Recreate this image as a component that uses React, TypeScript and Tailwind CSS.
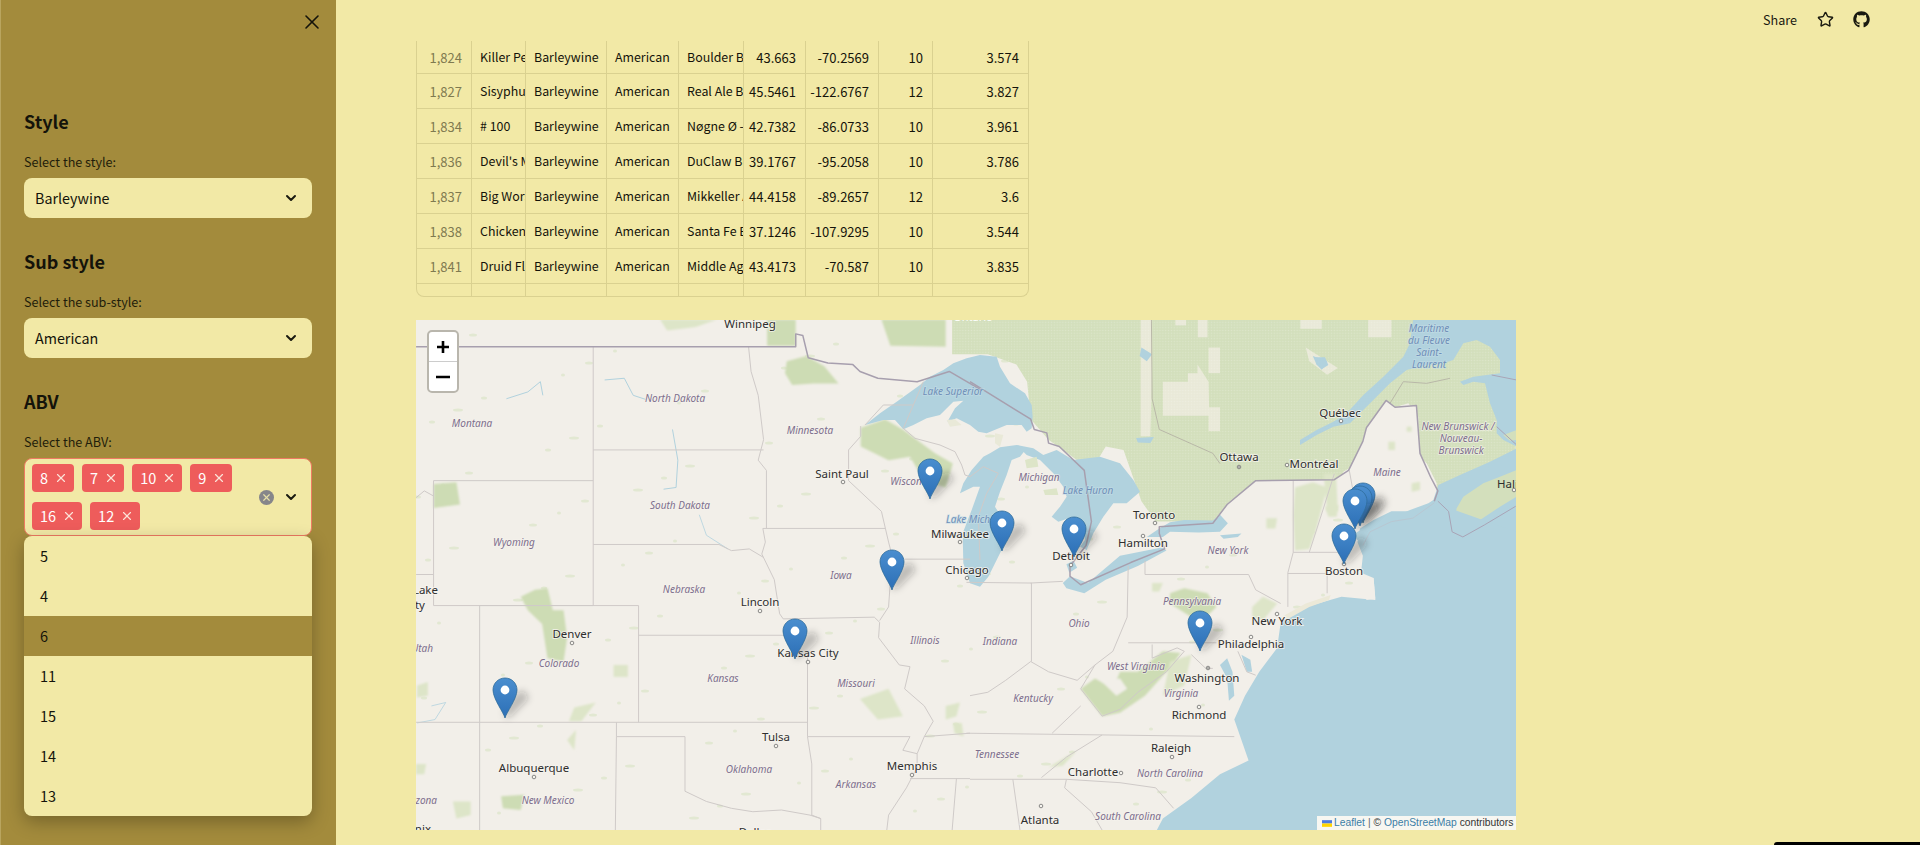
import React from "react";
import { ChevronDown, X, Star } from "lucide-react";
import { FaGithub } from "react-icons/fa";

const rows = [
  ["1,824", "Killer Pecan", "Barleywine", "American", "Boulder Beer", "43.663", "-70.2569", "10", "3.574"],
  ["1,827", "Sisyphus", "Barleywine", "American", "Real Ale Brewing", "45.5461", "-122.6767", "12", "3.827"],
  ["1,834", "# 100", "Barleywine", "American", "Nøgne Ø - Brewery", "42.7382", "-86.0733", "10", "3.961"],
  ["1,836", "Devil's Milk", "Barleywine", "American", "DuClaw Brewing", "39.1767", "-95.2058", "10", "3.786"],
  ["1,837", "Big Worse", "Barleywine", "American", "Mikkeller ApS", "44.4158", "-89.2657", "12", "3.6"],
  ["1,838", "Chicken Killer", "Barleywine", "American", "Santa Fe Brewing", "37.1246", "-107.9295", "10", "3.544"],
  ["1,841", "Druid Fluid", "Barleywine", "American", "Middle Ages", "43.4173", "-70.587", "10", "3.835"],
  ["", "", "", "", "", "", "", "", ""],
];

const widths = ["w-[55px]", "w-[54px]", "w-[81px]", "w-[72px]", "w-[65px]", "w-[62px]", "w-[73px]", "w-[54px]", "flex-1"];
const right = [true, false, false, false, false, true, true, true, true];

function Cell({ i, text, last }: { i: number; text: string; last: boolean }) {
  return (
    <div
      className={`${widths[i]} shrink-0 h-full flex items-center overflow-hidden whitespace-nowrap ${
        right[i] ? "justify-end pr-[9px] text-[13px]" : "pl-[8px] text-[12.4px]"
      } ${last ? "" : "border-r border-[#dad190]"} ${i === 0 ? "text-[#7f7a50]" : "text-[#14130a]"}`}
    >
      {text}
    </div>
  );
}

function Table() {
  return (
    <div className="w-[613px] h-[256px] overflow-hidden border-x border-b border-[#dad190] rounded-b-[8px] leading-none">
      {rows.map((r, idx) => (
        <div
          key={idx}
          className={`flex ${idx === 0 ? "h-[33px]" : "h-[35px]"} ${idx === rows.length - 1 ? "" : "border-b border-[#dad190]"}`}
        >
          {r.map((t, i) => (
            <Cell key={i} i={i} text={t} last={i === 8} />
          ))}
        </div>
      ))}
    </div>
  );
}

function SelectBox({ value }: { value: string }) {
  return (
    <div className="h-[40px] rounded-[8px] bg-[#f2e9a6] flex items-center justify-between pl-[11px] pr-[13px] text-[14.3px] text-[#14130a]">
      <span>{value}</span>
      <ChevronDown size={16} strokeWidth={3} className="text-[#1a1a10]" />
    </div>
  );
}

function Heading({ children, className }: { children: React.ReactNode; className: string }) {
  return <div className={`text-[18px] leading-[22px] pb-[2px] font-semibold text-[#14130a] ${className}`}>{children}</div>;
}

function Label({ children, className }: { children: React.ReactNode; className: string }) {
  return <div className={`text-[12.6px] leading-[20px] pb-[6px] text-[#1f1d0a] ${className}`}>{children}</div>;
}

function Tag({ n }: { n: string }) {
  return (
    <div className="h-[28px] rounded-[4px] bg-[#ee5c5b] text-white text-[14.5px] flex items-center pl-[8px] pr-[6px] gap-[6px]">
      <span>{n}</span>
      <X size={14} strokeWidth={2} className="text-[#fbe3d8]" />
    </div>
  );
}

function Sidebar() {
  const opts = ["5", "4", "6", "11", "15", "14", "13"];
  return (
    <aside className="w-[336px] shrink-0 h-full bg-[#a38b3c] border-l border-[#b9a55f] pl-[23px] pr-[24px] flex flex-col">
      <div className="h-[110px] flex justify-end items-start pt-[10px] -mr-[12px]">
        <X size={24} strokeWidth={1.6} className="text-[#14130a]" />
      </div>
      <Heading className="">Style</Heading>
      <Label className="mt-[18px]">Select the style:</Label>
      <SelectBox value="Barleywine" />
      <Heading className="mt-[32px]">Sub style</Heading>
      <Label className="mt-[18px]">Select the sub-style:</Label>
      <SelectBox value="American" />
      <Heading className="mt-[32px]">ABV</Heading>
      <Label className="mt-[18px]">Select the ABV:</Label>
      <div className="h-[78px] rounded-[8px] bg-[#f2e9a6] border border-[#ee7a62] flex items-center">
        <div className="w-[234px] pl-[7px] flex flex-wrap gap-x-[8px] gap-y-[10px]">
          {["8", "7", "10", "9", "16", "12"].map((n) => (
            <Tag key={n} n={n} />
          ))}
        </div>
        <div className="w-[15px] h-[15px] rounded-full bg-[#86868a] flex items-center justify-center">
          <X size={11} strokeWidth={2.6} className="text-[#e6dfa8]" />
        </div>
        <ChevronDown size={16} strokeWidth={3} className="ml-[9px] text-[#1a1a10]" />
      </div>
      <div className="rounded-[8px] overflow-hidden bg-[#f2e9a6] shadow-[0_6px_18px_rgba(0,0,0,0.28)] relative">
        {opts.map((o) => (
          <div
            key={o}
            className={`h-[40px] pl-[16px] flex items-center text-[14.5px] text-[#14130a] ${o === "6" ? "bg-[#a38b3c]" : ""}`}
          >
            {o}
          </div>
        ))}
      </div>
    </aside>
  );
}

const A = "translate(410 310) scale(0.35714 0.3413)";
const B = "translate(970 310) scale(0.35714 0.3413)";
const C = "translate(840 360) scale(0.33333)";
const D = "translate(1300 320) scale(0.33333)";

const Fill = ({ p, c }: { p: string; c: string }) => <polygon points={p} fill={c} />;
const Ln = ({ p, c = "#cfcac8", w = 1 }: { p: string; c?: string; w?: number }) => (
  <polyline points={p} fill="none" stroke={c} strokeWidth={w} vectorEffect="non-scaling-stroke" strokeLinejoin="round" />
);

const WATER = "#b1d2de";
const FOREST = "#cddcb4";
const SOFT = "#dde5c8";
const CAN = "#d3dfbc";
const PALE = "#e9e9d8";
const BORDER = "#a79fae";
const CANADA =
  "-50,28 1528,28 1528,650 1310,530 1290,490 1260,420 1250,280 1190,285 1165,265 1110,345 1100,385 1060,470 1020,497 800,500 720,570 680,620 520,620 480,560 430,410 380,400 340,470 220,380 170,320 160,210 130,160 50,130 -50,130";

const specks = Array.from({ length: 170 }, (_, i) => {
  const x = 416 + ((i * 397 + 31) % 1000);
  const y = 330 + ((i * 211 + 17) % 490);
  return { x, y, rx: 2 + (i % 4), ry: 1.5 + ((i * 3) % 3) };
});

const cities: [string, number, number][] = [
  ["Winnipeg", 750, 325],
  ["Saint Paul", 842, 475],
  ["Lincoln", 760, 603],
  ["Denver", 572, 635],
  ["Kansas City", 808, 654],
  ["Tulsa", 776, 738],
  ["Albuquerque", 534, 769],
  ["Memphis", 912, 767],
  ["Milwaukee", 960, 535],
  ["Chicago", 967, 571],
  ["Toronto", 1154, 516],
  ["Hamilton", 1143, 544],
  ["Detroit", 1071, 557],
  ["Ottawa", 1239, 458],
  ["Montréal", 1314, 465],
  ["Québec", 1340, 414],
  ["Boston", 1344, 572],
  ["New York", 1277, 622],
  ["Philadelphia", 1251, 645],
  ["Washington", 1207, 679],
  ["Richmond", 1199, 716],
  ["Raleigh", 1171, 749],
  ["Charlotte", 1093, 773],
  ["Atlanta", 1040, 821],
  ["Dallas", 755, 833],
];

const states: [string, number, number][] = [
  ["Montana", 472, 424],
  ["North Dakota", 675, 399],
  ["Minnesota", 810, 431],
  ["Wiscon", 906, 482],
  ["South Dakota", 680, 506],
  ["Wyoming", 514, 543],
  ["Nebraska", 684, 590],
  ["Iowa", 841, 576],
  ["Illinois", 925, 641],
  ["Colorado", 559, 664],
  ["Kansas", 723, 679],
  ["Missouri", 856, 684],
  ["Oklahoma", 749, 770],
  ["Arkansas", 856, 785],
  ["New Mexico", 548, 801],
  ["Maine", 1387, 473],
  ["New York", 1228, 551],
  ["Pennsylvania", 1192, 602],
  ["Ohio", 1079, 624],
  ["Indiana", 1000, 642],
  ["West Virginia", 1136, 667],
  ["Virginia", 1181, 694],
  ["Kentucky", 1033, 699],
  ["Tennessee", 997, 755],
  ["North Carolina", 1170, 774],
  ["South Carolina", 1128, 817],
  ["Michigan", 1039, 478],
  ["New Brunswick /", 1458, 427],
  ["Nouveau-", 1461, 439],
  ["Brunswick", 1461, 451],
];

const waters: [string, number, number][] = [
  ["Lake Superior", 953, 392],
  ["Lake Huron", 1088, 491],
  ["Lake Michigan", 978, 520],
  ["Estuaire", 1429, 316],
  ["Maritime", 1429, 329],
  ["du Fleuve", 1429, 341],
  ["Saint-", 1429, 353],
  ["Laurent", 1429, 365],
];

const dots: [number, number][] = [
  [843, 482], [760, 611], [572, 643], [808, 662], [776, 746], [534, 777], [912, 775], [960, 542], [967, 578],
  [1155, 523], [1143, 536], [1071, 565], [1239, 467], [1287, 465], [1341, 421], [1344, 564], [1277, 614],
  [1251, 637], [1208, 668], [1199, 707], [1172, 757], [1121, 773], [1041, 806], [1514, 490],
];

const pins: [number, number][] = [
  [1363, 523], [1360, 526], [1355, 529], [1344, 564], [930, 499], [892, 590], [795, 659], [505, 718], [1002, 551], [1074, 557], [1200, 651],
];

function Pin({ x, y }: { x: number; y: number }) {
  return (
    <g transform={`translate(${x} ${y})`}>
      <polygon points="0,0 6,-2 24,-20 18,-28 8,-22 0,-8" fill="rgba(40,40,40,0.26)" filter="url(#blur)" />
      <path
        d="M0 0C-1 -5 -12 -19 -12 -28C-12 -35 -6.5 -40 0 -40C6.5 -40 12 -35 12 -28C12 -19 1 -5 0 0Z"
        fill="url(#pin)"
        stroke="#2f6c9a"
        strokeWidth="0.8"
      />
      <circle cx="0" cy="-28" r="4.4" fill="#fff" />
    </g>
  );
}

function MapArt() {
  return (
    <svg viewBox="416 320 1100 510" className="w-full h-full block">
      <defs>
        <linearGradient id="pin" x1="0" y1="0" x2="0" y2="1">
          <stop offset="0" stopColor="#4a8ecf" />
          <stop offset="1" stopColor="#2c6fb6" />
        </linearGradient>
        <filter id="blur" x="-50%" y="-50%" width="200%" height="200%">
          <feGaussianBlur stdDeviation="3.5" />
        </filter>
        <filter id="soft" x="-5%" y="-5%" width="110%" height="110%">
          <feGaussianBlur stdDeviation="2.5" />
        </filter>
        <pattern id="tex" width="8" height="8" patternUnits="userSpaceOnUse">
          <circle cx="4" cy="4" r="2" fill="#ffffff" fillOpacity="0.22" />
        </pattern>
      </defs>
      <rect x="416" y="320" width="1100" height="510" fill="#f2efe9" />

      {specks.map((s, i) => (
        <ellipse key={i} cx={s.x} cy={s.y} rx={s.rx} ry={s.ry} fill="#e2e8d2" />
      ))}

      {/* US forests, west and centre */}
      <g transform={A}>
        <g filter="url(#soft)">
          <Fill c={FOREST} p="1055,150 1110,135 1160,165 1200,215 1130,215 1070,220 1050,185" />
          <Fill c={FOREST} p="1262,345 1330,320 1380,350 1470,420 1520,450 1500,520 1440,500 1400,430 1340,440 1262,400" />
          <Fill c={FOREST} p="1320,28 1500,28 1500,108 1345,105" />
          <Fill c={FOREST} p="1000,28 1080,28 1080,105 1000,105" />
          <Fill c={SOFT} p="700,28 860,28 800,50 720,60" />
          <Fill c={FOREST} p="66,510 130,505 140,570 66,580" />
          <Fill c={FOREST} p="310,840 350,820 385,815 400,880 430,880 440,960 430,1030 385,1020 370,920 330,880" />
          <Fill c={SOFT} p="445,1205 460,1165 520,1150 480,1205" />
          <Fill c={SOFT} p="1260,1140 1340,1110 1380,1190 1310,1200" />
          <Fill c={FOREST} p="255,1425 320,1420 310,1465 260,1460" />
          <Fill c={SOFT} p="440,1260 465,1230 460,1290" />
          <Fill c={SOFT} p="570,1040 610,1040 610,1075 570,1075" />
          <Fill c={SOFT} p="1500,1160 1540,1150 1530,1190 1500,1200" />
          <Fill c={SOFT} p="1520,1210 1545,1210 1550,1250 1525,1240" />
          <Fill c={SOFT} p="120,1440 170,1440 170,1480 130,1490" />
          <Fill c={SOFT} p="17,1330 45,1330 40,1360 17,1360" />
          <Fill c={SOFT} p="20,1100 50,1090 50,1130 20,1135" />
        </g>
        <Ln c={WATER} w={1} p="270,260 330,240 365,210 372,250" />
        <Ln c={WATER} w={1} p="545,205 600,200 625,250 660,262" />
        <Ln c={WATER} w={1} p="735,350 750,440 745,520 710,525" />
        <Ln c={WATER} w={0.8} p="810,600 830,660 890,700" />
        <Ln c={WATER} w={0.8} p="60,1160 100,1150 70,1200 20,1210" />
      </g>

      {/* Canada */}
      <g transform={B}>
        <Fill c={CAN} p={CANADA} />
        <Fill c={PALE} p="478,28 510,28 510,170 505,370 478,370" />
        <Fill c={PALE} p="540,210 610,210 610,185 637,185 637,160 668,210 670,310 540,310" />
        <Fill c={PALE} p="668,110 700,110 700,185 668,185" />
        <Fill c={PALE} p="668,285 700,285 700,355 668,355" />
        <Fill c={PALE} p="638,28 665,28 665,80 638,80" />
        <Fill c={PALE} p="925,28 985,28 985,55 925,55" />
        <Fill c={PALE} p="1115,28 1180,28 1180,80 1115,80" />
        <Fill c={PALE} p="575,28 605,28 605,45 575,45" />
        <Fill c={PALE} p="940,110 1030,170 1000,190 950,150" />
        <polygon points={CANADA} fill="url(#tex)" />
        <Fill c={WATER} p="960,135 1000,150 985,175 970,160" />
        <Fill c={WATER} p="480,110 510,130 495,150 475,135" />
        <Fill c={WATER} p="465,375 515,372 505,390 470,388" />
      </g>
      <g transform={B}>
        <g filter="url(#soft)">
          <Fill c={SOFT} p="910,520 960,505 1000,520 970,640 950,700 910,705 905,600" />
          <Fill c={SOFT} p="990,480 1025,480 1030,590 1000,590" />
          <Fill c={FOREST} p="560,830 600,815 665,830 690,870 660,900 620,900 560,860" />
          <Fill c={FOREST} p="310,1110 350,1080 400,1110 420,1060 470,1060 540,1000 590,1005 550,1060 490,1130 420,1180 370,1190" />
          <Fill c="#f2efe9" p="370,1090 420,1080 440,1110 410,1130" />
          <Fill c={SOFT} p="790,870 820,840 860,860 820,910 790,900" />
          <Fill c={SOFT} p="830,610 860,610 855,640 830,640" />
          <Fill c={SOFT} p="220,1340 300,1290 260,1335" />
          <Fill c={SOFT} p="560,1030 620,1010 600,1100 540,1130" />
          <Fill c={SOFT} p="510,800 540,800 530,825 510,825" />
        </g>
      </g>
      {/* Maine on top of the Canadian green */}
      <g transform={D}>
        <Fill c="#f2efe9" p="130,455 155,440 185,370 200,330 260,240 275,265 325,250 355,290 355,410 380,430 410,490 410,530 300,600 170,640 130,600" />
        <g filter="url(#soft)">
          <Fill c={SOFT} p="265,365 285,365 285,390 265,390" />
          <Fill c={SOFT} p="320,320 335,320 335,335 320,335" />
          <Fill c={SOFT} p="335,490 360,485 360,510 335,515" />
          <Fill c={SOFT} p="75,560 115,555 110,590 85,590" />
        </g>
      </g>

      {/* Water */}
      <g transform={C}>
        <Fill
          c={WATER}
          p="75,195 120,160 170,125 240,75 270,50 310,30 340,10 380,-5 420,-15 470,-10 480,20 510,70 555,100 575,135 578,170 575,205 560,215 545,195 500,195 440,220 415,215 390,195 350,175 322,185 345,145 370,122 340,125 300,165 260,175 220,195 190,208 165,180 130,180"
        />
        <Fill
          c={WATER}
          p="360,400 370,370 395,330 430,290 450,280 480,262 530,255 560,265 540,290 515,300 500,345 480,395 465,440 490,480 510,520 480,580 445,650 420,680 390,670 370,610 368,520 395,450 420,380 400,380"
        />
        <Fill
          c={WATER}
          p="530,255 580,265 610,285 650,270 700,300 780,290 840,310 880,360 900,395 860,430 820,430 790,470 760,520 740,570 720,560 735,540 730,500 700,470 655,485 635,470 660,440 680,410 670,380 640,340 600,300 560,285"
        />
        <Fill c={PALE} p="320,180 345,178 365,195 330,200" />
        <Fill c={PALE} p="465,220 490,225 480,260 465,250" />
        <Fill c={SOFT} p="555,300 590,290 595,320 560,325" />
        <Fill c={SOFT} p="610,390 650,385 655,405 615,405" />
      </g>
      <g transform={B}>
        <Fill c={WATER} p="260,800 280,780 330,800 420,720 540,695 550,705 470,750 380,790 320,830 270,815" />
        <Fill c={WATER} p="270,745 290,735 300,755 278,770" />
        <Fill c={WATER} p="495,665 530,640 560,622 600,615 680,617 700,600 722,625 700,650 640,652 560,650 540,665" />
        <Fill c={WATER} p="700,1040 720,1020 735,1060 740,1130 725,1145 720,1080" />
        <Fill c={WATER} p="760,1010 785,1025 790,1060 775,1060" />
        <Fill c={WATER} p="700,660 760,655 750,665 710,670" />
      </g>
      <g transform={D}>
        <Fill
          c={WATER}
          p="340,-5 650,-5 650,380 610,360 590,340 590,300 570,250 555,190 520,185 490,195 480,185 520,170 600,160 600,120 570,80 530,60 490,70 460,120 430,130 380,135 320,150 270,190 220,240 180,280 150,310 100,320 50,345 0,375 0,360 50,330 100,305 140,280 190,225 250,170 310,110 330,70"
        />
        <Fill c={WATER} p="48,112 75,112 85,135 65,148 50,130" />
        <Fill c={WATER} p="400,540 415,495 480,465 570,425 650,385 650,660 170,660 165,640 200,620 260,600 330,570 385,550" />
        <Fill c={CAN} p="470,565 490,530 550,490 600,470 650,450 650,530 600,560 540,600 490,615 465,590" />
        <Fill c={CAN} p="610,345 650,330 650,360 630,362" />
      </g>
      <g transform={B}>
        <Fill
          c={WATER}
          p="1300,565 1240,590 1180,590 1130,615 1092,640 1085,680 1100,720 1095,770 1130,785 1135,850 1040,840 940,870 870,915 860,990 810,1060 770,1130 740,1200 760,1260 780,1320 700,1360 620,1430 540,1490 520,1530 1530,1530 1530,1100 1530,650"
        />
        <Fill c="#ece9d8" p="880,895 940,860 1010,835 1005,850 950,870 890,905" />
        <Fill c="#f2efe9" p="1100,790 1130,785 1135,845 1110,850" />
      </g>

      {/* State lines */}
      <g transform={A}>
        <Ln p="513,108 513,866" />
        <Ln p="513,410 990,410" />
        <Ln p="513,687 865,687 900,705 950,700 990,725" />
        <Ln p="948,108 955,180 975,250 990,380 975,440 998,470 998,640" />
        <Ln p="988,640 1330,640" />
        <Ln p="1262,340 1262,370 1228,410 1228,500 1320,590 1340,680 1350,720 1340,870 1315,910" />
        <Ln p="988,640 995,680 985,715 1020,790 1035,890 1045,905 1300,900 1315,915 1312,960 1370,1040 1400,1045 1385,1110 1440,1160 1465,1205 1440,1250 1420,1300 1380,1290 1400,1250" />
        <Ln p="640,953 1060,953" />
        <Ln p="640,866 640,1208" />
        <Ln p="195,866 640,866" />
        <Ln p="195,866 195,1524" />
        <Ln p="17,1208 1113,1208" />
        <Ln p="1113,1000 1113,1250 1125,1330 1125,1480 1150,1490 1150,1524" />
        <Ln p="578,1208 578,1250 770,1250 770,1410 830,1440 900,1460 960,1470 1040,1465 1120,1480 1150,1490" />
        <Ln p="578,1250 575,1524" />
        <Ln p="1113,1250 1400,1250" />
        <Ln p="1400,1373 1568,1373" />
        <Ln p="1530,1373 1518,1524" />
        <Ln p="1440,1250 1568,1240" />
        <Ln p="1420,1300 1420,1340 1390,1400 1340,1480 1335,1524" />
        <Ln p="66,500 513,500" />
        <Ln p="66,500 66,866 513,866" />
        <Ln p="17,550 40,530 66,545" />
        <Ln p="17,775 66,775" />
        <Ln p="1385,730 1568,730" />
      </g>
      <g transform={C}>
        <Ln p="190,205 225,235 300,255 345,275 365,315 375,345 390,350 430,320 475,340 440,400 415,470 420,600" />
        <Ln p="75,195 130,135 220,135" />
        <Ln p="190,205 250,65" />
      </g>
      <g transform={B}>
        <Ln p="170,800 260,795" />
        <Ln p="-10,798 172,800 172,1030" />
        <Ln p="0,1130 50,1120 100,1085 170,1030 220,1060 300,1085 350,1040 400,1000 440,900 443,750" />
        <Ln p="443,975 690,975" />
        <Ln p="490,735 490,775 780,775 800,820 870,860" />
        <Ln p="905,500 905,710 890,770 890,870" />
        <Ln p="905,710 1030,710" />
        <Ln p="890,772 1000,772 1000,830" />
        <Ln p="1020,480 990,580 950,710" />
        <Ln p="1062,470 1090,630" />
        <Ln p="510,980 510,1020 580,990 600,1000 550,1060 470,1120 420,1170 370,1190 310,1110 350,1040" />
        <Ln p="620,1010 660,1050 680,1050" />
        <Ln p="-10,1240 370,1245 740,1250" />
        <Ln p="0,1375 270,1375 420,1385 520,1400 570,1460" />
        <Ln p="200,1370 270,1310 370,1245" />
        <Ln p="270,1375 265,1400 340,1470 370,1524" />
        <Ln p="120,1375 140,1524" />
        <Ln p="230,1240 310,1160" />
        <Ln p="750,1000 775,1060 800,1070" />
        <Ln p="508,28 510,260 530,350 680,420 700,450" c="#b9b8a8" />
        <Ln p="1528,575 1440,630 1380,665 1350,650 1340,590 1310,560" c="#a9a4b6" />
        <Ln p="1300,565 1240,610 1180,620 1120,650 1100,690" c="#b8c7d2" />
      </g>
      <g transform={D}>
        <Ln p="270,250 310,185 380,190 450,175" c="#b9b8a8" />
        <Ln p="575,165 650,180" c="#a9a4b6" />
        <Ln p="590,320 650,375" c="#a9a4b6" />
      </g>

      {/* Canada / US border */}
      <g transform={A}>
        <Ln c={BORDER} w={1.5} p="17,108 1080,108 1080,70 1100,75 1115,140 1170,155 1240,160 1260,180 1310,200 1420,210 1510,180 1600,235" />
      </g>
      <g transform={B}>
        <Ln
          c={BORDER}
          w={1.5}
          p="0,210 170,320 180,350 215,360 220,390 250,400 320,470 340,620 325,690 280,750 280,780 310,805 450,740 545,700 530,655 530,635 680,625 720,570 800,500 1020,497 1060,470 1100,385 1110,345 1165,265 1190,285 1250,280 1260,420 1290,490 1310,530 1300,560"
        />
      </g>

      {dots.map(([x, y], i) => (
        <circle key={i} cx={x} cy={y} r="1.8" fill="#f6f4ee" stroke="#6f6f6f" strokeWidth="0.8" />
      ))}
      <circle cx="1239" cy="467" r="0.8" fill="#555" />
      <circle cx="1208" cy="668" r="0.8" fill="#555" />

      <g className="font-['Noto_Sans']" textAnchor="middle" dominantBaseline="middle">
        {states.map(([t, x, y], i) => (
          <text key={i} x={x} y={y} fontSize="10" fontStyle="italic" fill="#7d6e8c" stroke="#f6f4ee" strokeWidth="1.5" paintOrder="stroke" strokeOpacity="0.7">
            {t}
          </text>
        ))}
        {waters.map(([t, x, y], i) => (
          <text key={i} x={x} y={y} fontSize="10" fontStyle="italic" fill="#6f8fb8" stroke="#c4dde6" strokeWidth="1.5" paintOrder="stroke" strokeOpacity="0.7">
            {t}
          </text>
        ))}
        {cities.map(([t, x, y], i) => (
          <text key={i} x={x} y={y} fontSize="11.5" fill="#2e2e2e" stroke="#f6f4ee" strokeWidth="1.8" paintOrder="stroke" strokeOpacity="0.8">
            {t}
          </text>
        ))}
        <text x="973" y="318" fontSize="11" fill="#fff">Ontario</text>
        <g textAnchor="end">
          <text x="438" y="591" fontSize="11.5" fill="#2e2e2e" stroke="#f6f4ee" strokeWidth="1.8" paintOrder="stroke">Lake</text>
          <text x="425" y="606" fontSize="11.5" fill="#2e2e2e" stroke="#f6f4ee" strokeWidth="1.8" paintOrder="stroke">City</text>
          <text x="433" y="649" fontSize="10" fontStyle="italic" fill="#7d6e8c">Utah</text>
          <text x="437" y="801" fontSize="10" fontStyle="italic" fill="#7d6e8c">Arizona</text>
          <text x="431" y="830" fontSize="11.5" fill="#2e2e2e">Phoenix</text>
        </g>
        <text x="1497" y="485" fontSize="11.5" fill="#2e2e2e" textAnchor="start">Halifax</text>
      </g>

      {pins.map(([x, y], i) => (
        <Pin key={i} x={x} y={y} />
      ))}
    </svg>
  );
}

function LeafletMap() {
  return (
    <div className="relative mt-[23px] w-[1100px] h-[510px] overflow-hidden">
      <MapArt />
      <div className="absolute left-[11px] top-[10px] w-[32px] h-[63px] border-2 border-[#b9b6ad] rounded-[5px] bg-white overflow-hidden flex flex-col">
        <div className="h-[30px] border-b border-[#cccccc] flex items-center justify-center text-[#000]">
          <svg width="14" height="14" viewBox="0 0 14 14"><path d="M7 1V13M1 7H13" stroke="#000" strokeWidth="2.6" /></svg>
        </div>
        <div className="flex-1 flex items-center justify-center">
          <svg width="14" height="4" viewBox="0 0 14 4"><path d="M0 2H14" stroke="#000" strokeWidth="2.4" /></svg>
        </div>
      </div>
      <div className="absolute right-0 bottom-0 h-[14px] w-[199px] bg-[#f7f7f2] flex items-center pl-[5px] text-[10.3px] leading-none font-['Liberation_Sans',Arial,sans-serif] text-[#333] whitespace-nowrap">
        <svg width="10" height="7" viewBox="0 0 12 8" className="mr-[2px]">
          <rect width="12" height="4" fill="#4C7BE1" />
          <rect y="4" width="12" height="4" fill="#FFD500" />
        </svg>
        <span className="text-[#3b7ea6]">Leaflet</span>
        <span className="mx-[3px] text-[#666]">|</span>
        <span>©&nbsp;</span>
        <span className="text-[#3b7ea6]">OpenStreetMap</span>
        <span>&nbsp;contributors</span>
      </div>
    </div>
  );
}

export default function App() {
  return (
    <div className="relative w-full h-[845px] overflow-hidden flex bg-[#f2e9a6] font-['Noto_Sans_CJK_SC','Noto_Sans',sans-serif]">
      <Sidebar />
      <main className="flex-1 min-w-0 pl-[80px]">
        <header className="h-[41px] flex items-start justify-end pr-[50px] pt-[10px] text-[#1a1a10]">
          <span className="text-[12.6px] leading-[20px] mr-[20px]">Share</span>
          <Star size={17} strokeWidth={2} className="mt-[1px] mr-[19px]" />
          <FaGithub size={17} className="mt-[1px]" />
        </header>
        <Table />
        <LeafletMap />
      </main>
      <div className="absolute right-0 bottom-0 w-[146px] h-[3px] bg-black rounded-tl-[8px]" />
    </div>
  );
}
